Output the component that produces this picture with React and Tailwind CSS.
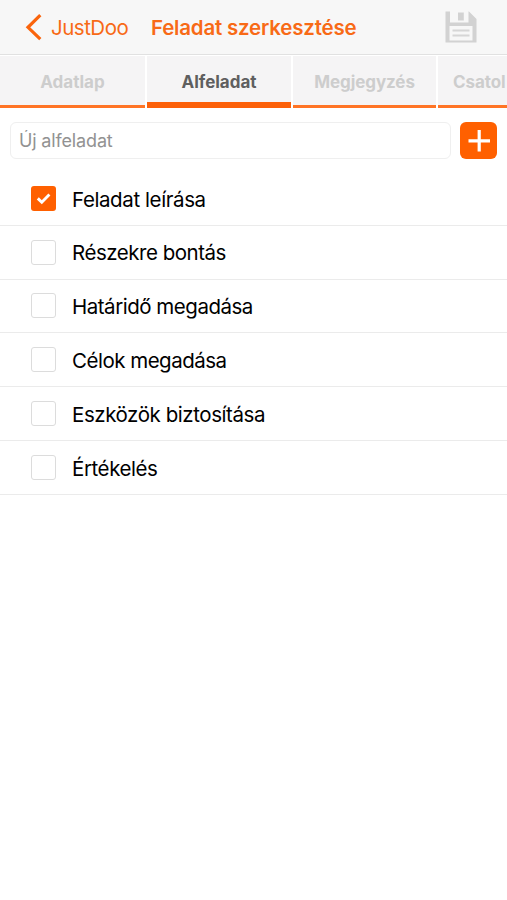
import React from "react";

const tasks = [
  { label: "Feladat leírása", done: true, spacing: "tracking-[-0.4px]" },
  { label: "Részekre bontás", spacing: "tracking-[-0.48px]" },
  { label: "Határidő megadása", spacing: "tracking-[-0.48px]" },
  { label: "Célok megadása", spacing: "tracking-[-0.5px]" },
  { label: "Eszközök biztosítása", spacing: "tracking-[-0.43px]" },
  { label: "Értékelés", spacing: "tracking-[-0.42px]" },
];

function SaveIcon() {
  return (
    <svg width="32" height="32" viewBox="0 0 32 32" className="block">
      <path d="M0.5 0.5H24L31.5 8V31.5H0.5Z" fill="#d2d2d2" />
      <path d="M5 0H23.5V11.5H5Z" fill="#f7f7f7" />
      <path d="M13 1.5H18.8V9.5H13Z" fill="#d2d2d2" />
      <path d="M4.5 15H27.5V29.5H4.5Z" fill="#f7f7f7" />
      <path d="M7.5 19.5H24.5M7.5 24.5H24.5" stroke="#d6d6d6" strokeWidth="2" />
    </svg>
  );
}

function Checkbox({ checked }) {
  if (!checked) {
    return <span className="h-[25px] w-[25px] shrink-0 rounded-[3px] border border-[#dcdcdc] bg-white" />;
  }
  return (
    <span className="flex h-[25px] w-[25px] shrink-0 rounded-[3px] bg-[#ff6000]">
      <svg width="25" height="25" viewBox="0 0 25 25" fill="none">
        <path d="M6.8 12.4L10.8 16.3L18.4 8.6" stroke="white" strokeWidth="2.9" />
      </svg>
    </span>
  );
}

export default function App() {
  return (
    <div className="h-[900px] w-full overflow-hidden bg-white font-['Inter',sans-serif] text-black">
      <header className="flex h-[55px] items-center border-b border-[#e1e1e1] bg-[#f7f7f7] pl-[25px] pr-[30px] text-[#f86a16]">
        <svg width="18" height="28" viewBox="0 0 18 28" fill="none" className="shrink-0">
          <path d="M15.3 2.2L3 14.3L15.3 26.2" stroke="#fa640c" strokeWidth="3.2" />
        </svg>
        <span className="ml-[8px] w-[78px] whitespace-nowrap pt-[3px] text-[20.5px] tracking-[-0.5px]">JustDoo</span>
        <h1 className="ml-[22px] whitespace-nowrap pt-[3px] text-[20.5px] font-semibold tracking-[-0.2px]">Feladat szerkesztése</h1>
        <div className="ml-auto">
          <SaveIcon />
        </div>
      </header>
      <nav className="flex h-[53px] gap-[2px] overflow-hidden bg-white pt-px text-[17px] font-bold text-[#cdcdcd]">
        <div className="flex w-[145px] shrink-0 items-center justify-center border-b-[3px] border-[#ff7425] bg-[#f5f4f5] pt-[4px]">Adatlap</div>
        <div className="flex w-[144px] shrink-0 items-center justify-center border-b-[6px] border-[#fc6009] bg-[#f5f4f5] pt-[7px] text-[#5f5f5f]">Alfeladat</div>
        <div className="flex w-[143px] shrink-0 items-center justify-center border-b-[3px] border-[#ff7425] bg-[#f5f4f5] pt-[4px] tracking-[-0.1px]">Megjegyzés</div>
        <div className="flex min-w-0 flex-1 items-center border-b-[3px] border-[#ff7425] bg-[#f5f4f5] pl-[15px] pt-[4px] tracking-[-0.1px]">Csatol</div>
      </nav>
      <div className="flex h-[64px] gap-[9px] pl-[10px] pr-[10px] pt-[14px]">
        <input
          placeholder="Új alfeladat"
          className="h-[37px] min-w-0 flex-1 rounded-[6px] border border-[#efefef] bg-white px-[8px] text-[18px] tracking-[-0.15px] outline-none placeholder:text-[#929292]"
        />
        <button aria-label="Hozzáadás" className="h-[37px] w-[37px] shrink-0 rounded-[6px] bg-[#ff6000]">
          <svg width="37" height="37" viewBox="0 0 37 37">
            <path d="M8.5 18.8H30M19.2 8V29.5" stroke="white" strokeWidth="3.2" />
          </svg>
        </button>
      </div>
      <ul>
        {tasks.map((task) => (
          <li key={task.label} className="flex h-[53.8px] items-center gap-[16px] border-b border-[#ebebeb] pl-[31px]">
            <Checkbox checked={task.done} />
            <span className={`whitespace-nowrap pt-[3px] text-[20.5px] ${task.spacing}`}>{task.label}</span>
          </li>
        ))}
      </ul>
    </div>
  );
}
